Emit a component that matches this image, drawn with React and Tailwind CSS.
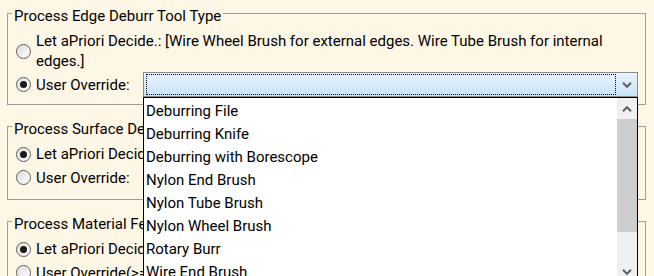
import React from 'react';

const options = [
  'Deburring File',
  'Deburring Knife',
  'Deburring with Borescope',
  'Nylon End Brush',
  'Nylon Tube Brush',
  'Nylon Wheel Brush',
  'Rotary Burr',
  'Wire End Brush',
  'Wire Tube Brush',
  'Wire Wheel Brush',
];

const Chevron = ({ up }) => (
  <svg width="10" height="6" viewBox="0 0 10 6" className="block">
    <path
      d={up ? 'M1 5.2 L5 1.2 L9 5.2' : 'M1 0.8 L5 4.8 L9 0.8'}
      fill="none"
      stroke="#606060"
      strokeWidth="2"
    />
  </svg>
);

const Radio = ({ checked }) => (
  <span className="flex h-[15px] w-[15px] shrink-0 items-center justify-center rounded-full border border-[#5c5c5c] bg-linear-to-br from-[#dcdcdc] to-white">
    {checked && <span className="h-[7px] w-[7px] rounded-full bg-[#1a1a1a]" />}
  </span>
);

const GroupBox = ({ title, className = '', children }) => (
  <div className={`border border-[#9c9c9c] ${className}`}>
    <div className="-mt-[8px] flex pl-[4px]">
      <span className="bg-[#fff7e6] px-[2px] leading-[20px]">{title}</span>
    </div>
    <div className="mt-[5px] pl-[8px] pr-[6px]">{children}</div>
  </div>
);

const DropdownList = () => (
  <div className="absolute left-0 top-full z-10 flex h-[186px] w-[495px] border border-black bg-white">
    <div className="flex-1 overflow-hidden pt-[2px]">
      {options.map((o) => (
        <div key={o} className="h-[23px] pl-[2px] leading-[23px] text-black">
          {o}
        </div>
      ))}
    </div>
    <div className="flex w-[20px] flex-col bg-[#f0f0f0]">
      <div className="flex h-[21px] items-center justify-center">
        <Chevron up />
      </div>
      <div className="h-[113px] bg-[#cdcdcd]" />
      <div className="flex-1" />
      <div className="flex h-[21px] items-center justify-center">
        <Chevron />
      </div>
    </div>
  </div>
);

const ComboBox = ({ open }) => (
  <div className="relative h-[25px] w-[495px] shrink-0">
    <div className="flex h-full border border-[#8a8a8a] bg-linear-to-b from-[#e8f2fc] to-[#cae3f8]">
      <div className="my-[1px] ml-[2px] flex-1 border border-dotted border-black" />
      <div className="flex w-[21px] items-center justify-center">
        <Chevron />
      </div>
    </div>
    {open && <DropdownList />}
  </div>
);

export default function App() {
  return (
    <div className="h-[276px] w-[654px] overflow-hidden bg-[#fff7e6] pl-[7px] pr-[8px] pt-[13px] font-['Roboto',sans-serif] text-[15px] text-black">
      <GroupBox title="Process Edge Deburr Tool Type" className="pb-[7px]">
        <div className="flex items-center gap-[5px]">
          <Radio />
          <span className="flex-1 leading-[20px]">
            Let aPriori Decide.: [Wire Wheel Brush for external edges. Wire Tube Brush for internal edges.]
          </span>
        </div>
        <div className="mt-[1px] flex h-[25px] items-center gap-[5px]">
          <Radio checked />
          <span className="w-[102px] leading-[20px]">User Override:</span>
          <ComboBox open />
        </div>
      </GroupBox>

      <GroupBox title="Process Surface Deburr Tool Type" className="mt-[21px] pb-[9px]">
        <div className="flex items-center gap-[5px]">
          <Radio checked />
          <span className="flex-1 leading-[20px]">Let aPriori Decide.: [Nylon Wheel Brush]</span>
        </div>
        <div className="mt-[1px] flex h-[25px] items-center gap-[5px]">
          <Radio />
          <span className="w-[102px] leading-[20px]">User Override:</span>
        </div>
      </GroupBox>

      <GroupBox title="Process Material Feed Rate" className="mt-[21px] pb-[9px]">
        <div className="flex items-center gap-[5px]">
          <Radio checked />
          <span className="flex-1 leading-[20px]">Let aPriori Decide.: [250 mm/min]</span>
        </div>
        <div className="mt-[1px] flex h-[25px] items-center gap-[5px]">
          <Radio />
          <span className="w-[102px] whitespace-nowrap leading-[20px]">User Override(&gt;=0):</span>
        </div>
      </GroupBox>
    </div>
  );
}
